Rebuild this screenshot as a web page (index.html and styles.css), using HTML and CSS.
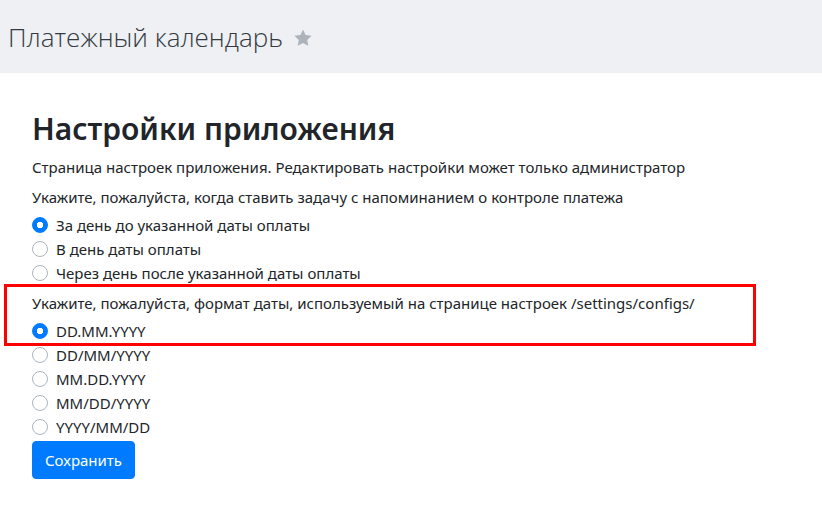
FILE: index.html
```html
<!DOCTYPE html>
<html lang="ru">
<head>
<meta charset="utf-8">
<title>Настройки приложения</title>
<link rel="stylesheet" href="styles.css">
</head>
<body>
<header class="topbar">
  <h2 class="page-title">Платежный календарь</h2>
  <svg class="star" viewBox="0 0 24 24" width="20" height="20" aria-hidden="true"><path d="M12 1.8l3.1 6.6 7.2.9-5.3 5 1.4 7.1L12 17.9l-6.4 3.5 1.4-7.1-5.3-5 7.2-.9z" fill="#adb3ba"/></svg>
</header>
<main class="content">
  <h1 class="heading">Настройки приложения</h1>
  <p class="lead">Страница настроек приложения. Редактировать настройки может только администратор</p>
  <form class="settings">
    <p class="question">Укажите, пожалуйста, когда ставить задачу с напоминанием о контроле платежа</p>
    <label class="opt"><input type="radio" name="remind" checked><span class="dot"></span>За день до указанной даты оплаты</label>
    <label class="opt"><input type="radio" name="remind"><span class="dot"></span>В день даты оплаты</label>
    <label class="opt"><input type="radio" name="remind"><span class="dot"></span>Через день после указанной даты оплаты</label>
    <div class="group-highlight">
      <p class="question q2">Укажите, пожалуйста, формат даты, используемый на странице настроек /settings/configs/</p>
      <label class="opt"><input type="radio" name="fmt" checked><span class="dot"></span>DD.MM.YYYY</label>
      <span class="marker"></span>
    </div>
    <label class="opt"><input type="radio" name="fmt"><span class="dot"></span>DD/MM/YYYY</label>
    <label class="opt"><input type="radio" name="fmt"><span class="dot"></span>MM.DD.YYYY</label>
    <label class="opt"><input type="radio" name="fmt"><span class="dot"></span>MM/DD/YYYY</label>
    <label class="opt"><input type="radio" name="fmt"><span class="dot"></span>YYYY/MM/DD</label>
    <button type="button" class="btn">Сохранить</button>
  </form>
</main>
</body>
</html>
```
FILE: styles.css
```css
* { box-sizing: border-box; }
html, body { margin: 0; padding: 0; }
body {
  font-family: "Noto Sans", "Open Sans", sans-serif;
  font-size: 15px;
  line-height: 24px;
  color: #212529;
  background: #fff;
}
.topbar {
  height: 73px;
  background: #eef0f3;
  display: flex;
  align-items: center;
  padding: 0 8px;
  gap: 10px;
}
.page-title {
  margin: 0;
  font-family: "Open Sans", "Noto Sans", sans-serif;
  font-weight: 300;
  font-size: 26px;
  line-height: 1;
  color: #333a40;
}
.star { margin-top: 3px; }
.content {
  padding: 37px 32px 0 32px;
}
.heading {
  margin: 0 0 7px 0;
  font-size: 30px;
  font-weight: 600;
  line-height: 38px;
  color: #212529;
}
.lead { margin: 0 0 6px 0; }
.settings { display: flex; flex-direction: column; align-items: flex-start; }
.question { margin: 0 0 4px 0; }
.q2 { margin-top: 6px; }
.opt {
  display: flex;
  align-items: center;
  gap: 8px;
  height: 24px;
  cursor: pointer;
}
.opt input { display: none; }
.dot {
  width: 16px;
  height: 16px;
  border-radius: 50%;
  border: 1px solid #adb5bd;
  background: #fff;
  flex: none;
}
.opt input:checked + .dot {
  border-color: #007bff;
  background: radial-gradient(circle, #fff 0 3px, #007bff 3.5px);
}
.group-highlight { position: relative; }
.marker {
  position: absolute;
  left: -28px;
  top: -1px;
  width: 752px;
  height: 62px;
  border: 3px solid #ff0000;
  pointer-events: none;
}
.btn {
  margin-top: 2px;
  height: 38px;
  padding: 0 12px;
  border: 1px solid #007bff;
  border-radius: 4px;
  background: #007bff;
  color: #fff;
  font-family: inherit;
  font-size: 15px;
  line-height: 24px;
}
```
